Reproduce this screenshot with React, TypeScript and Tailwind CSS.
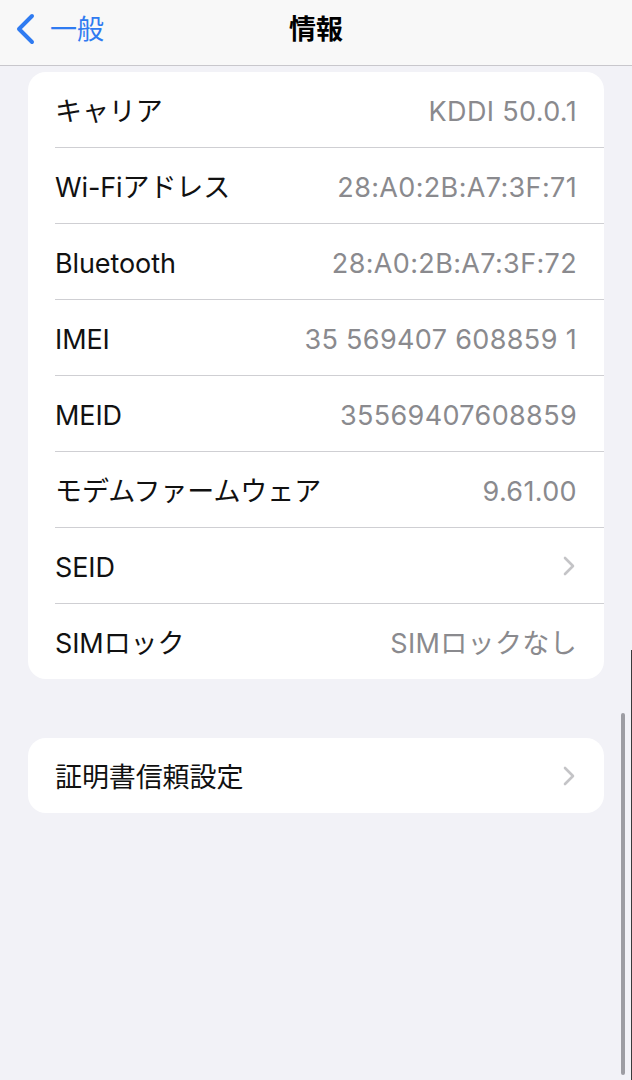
import React from 'react'

const font = { fontFamily: 'Inter, "Noto Sans CJK JP", sans-serif' }

type Row = { label: string; value?: string; chevron?: boolean }

const rows: Row[] = [
  { label: 'キャリア', value: 'KDDI 50.0.1' },
  { label: 'Wi-Fiアドレス', value: '28:A0:2B:A7:3F:71' },
  { label: 'Bluetooth', value: '28:A0:2B:A7:3F:72' },
  { label: 'IMEI', value: '35 569407 608859 1' },
  { label: 'MEID', value: '35569407608859' },
  { label: 'モデムファームウェア', value: '9.61.00' },
  { label: 'SEID', chevron: true },
  { label: 'SIMロック', value: 'SIMロックなし' },
]

function Chevron() {
  return (
    <svg width="14" height="22" viewBox="0 0 14 22" fill="none">
      <path d="M3 3l8 8-8 8" stroke="#c4c4c7" strokeWidth="2.6" strokeLinecap="round" strokeLinejoin="round" />
    </svg>
  )
}

function SettingsRow({ row, last }: { row: Row; last: boolean }) {
  return (
    <div className="pl-[27px]">
      <div className="h-[75px] flex items-center justify-between pr-[27px] pt-[5px]">
        <span className="text-[27px] text-[#111] tracking-[-0.1px]">{row.label}</span>
        {row.value && <span className="text-[27px] text-[#8a8a8e] tracking-[0.35px]">{row.value}</span>}
        {row.chevron && (
          <span className="mr-[1px] -mt-[5px]">
            <Chevron />
          </span>
        )}
      </div>
      {!last && <div className="h-px bg-[#cfcfd3]" />}
    </div>
  )
}

export default function App() {
  return (
    <div style={font} className="relative w-[632px] h-[1080px] bg-[#f2f2f7] overflow-hidden">
      <div className="h-[66px] bg-[#f8f8f8] border-b border-[#c8c7cc] flex items-center relative pb-[7px]">
        <div className="flex items-center pl-[14px] text-[#2f7bf1] gap-[14px]">
          <svg width="22" height="32" viewBox="0 0 22 32" fill="none">
            <path d="M18 3L5 16l13 13" stroke="#2f7bf1" strokeWidth="4" strokeLinecap="round" strokeLinejoin="round" />
          </svg>
          <span className="text-[27px] leading-none">一般</span>
        </div>
        <div className="absolute inset-0 flex items-center justify-center pointer-events-none pb-[7px]">
          <span className="text-[27px] font-semibold text-black leading-none">情報</span>
        </div>
      </div>

      <div className="px-[28px] pt-[6px]">
        <div className="bg-white rounded-[18px] overflow-hidden">
          {rows.map((r, i) => (
            <SettingsRow key={r.label} row={r} last={i === rows.length - 1} />
          ))}
        </div>

        <div className="mt-[59px] bg-white rounded-[18px] overflow-hidden">
          <SettingsRow row={{ label: '証明書信頼設定', chevron: true }} last />
        </div>
      </div>

      <div className="absolute right-[7px] top-[713px] w-[4px] h-[362px] rounded-full bg-[#9d9da3]" />
      <div className="absolute right-0 top-[650px] w-px bottom-0 bg-[#3a3a3c]" />
    </div>
  )
}
